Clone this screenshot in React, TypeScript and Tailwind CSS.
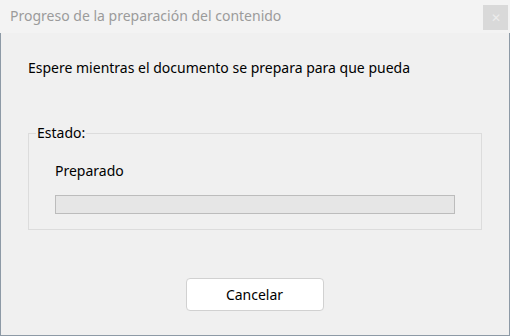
export default function App() {
  return (
    <div
      className="flex h-[336px] w-[510px] flex-col bg-[#f0f0f0] text-black"
      style={{ fontFamily: '"Segoe UI", "Noto Sans", "Open Sans", sans-serif' }}
    >
      {/* barra de título */}
      <div className="flex h-[33px] items-start justify-between bg-[#f3f3f3]">
        <span className="pl-[10px] pt-[6px] text-[14px] leading-[20px] text-[#9b9b9b]">
          Progreso de la preparación del contenido
        </span>
        <button className="mr-[2px] mt-[5px] flex h-[25px] w-[25px] items-center justify-center bg-[#d9d9d9] text-[12px] leading-none text-[#ececec]">
          ✕
        </button>
      </div>

      <div className="flex flex-1 flex-col border-x border-b border-[#8d9aa6] px-[27px]">
        <p className="mt-[25px] text-[14px] leading-[20px]">
          Espere mientras el documento se prepara para que pueda
        </p>

        <fieldset className="mt-[47px] h-[105px] border border-[#dcdcdc] px-[26px]">
          <legend className="ml-[-19px] px-[1px] text-[14px] leading-[16px]">Estado:</legend>
          <div className="mt-[20px] text-[14px] leading-[20px]">Preparado</div>
          <div className="mt-[14px] h-[19px] w-[400px] border border-[#bcbcbc] bg-[#e6e6e6]" />
        </fieldset>

        <div className="mt-[48px] flex justify-center">
          <button className="mr-[1px] h-[33px] w-[138px] rounded-[4px] border border-[#d1d1d1] bg-white text-[14px]">
            Cancelar
          </button>
        </div>
      </div>
    </div>
  )
}
